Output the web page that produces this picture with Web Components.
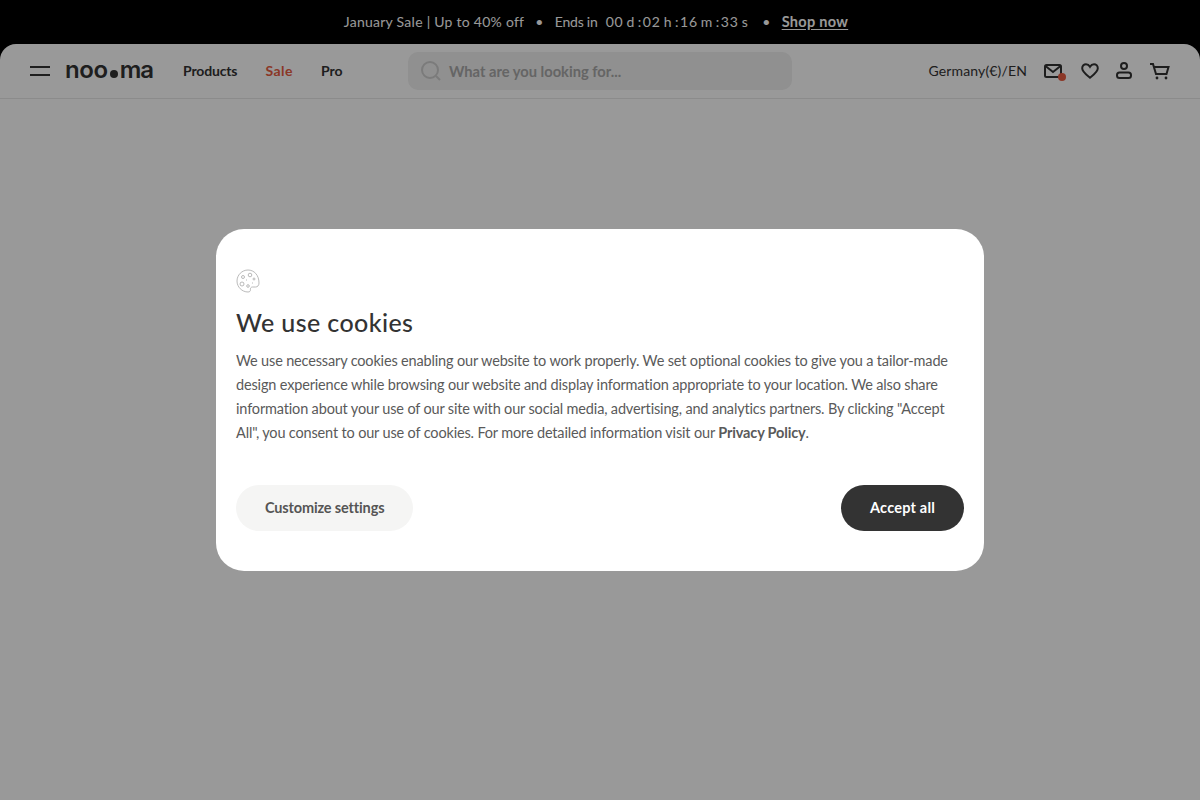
<!DOCTYPE html>
<html lang="en"><head><meta charset="utf-8"><title>noo.ma</title>
<style>
html,body{margin:0;height:100%;background:#000}
body{font-family:Lato,"Liberation Sans",sans-serif;color:#333;overflow:hidden}
</style></head><body>
<noo-page>
  <noo-announcement></noo-announcement>
  <noo-header></noo-header>
</noo-page>
<noo-overlay>
  <noo-cookie-dialog></noo-cookie-dialog>
</noo-overlay>
<script>
function def(name,html){customElements.define(name,class extends HTMLElement{constructor(){super();this.attachShadow({mode:'open'}).innerHTML=html}})}
def('noo-page',`<style>:host{display:flex;flex-direction:column;height:800px;background:#000}
::slotted(noo-header){flex:1}</style><slot></slot>`);
def('noo-announcement',`<style>:host{display:flex;height:42px;padding-bottom:2px;align-items:center;justify-content:center;color:#fff;font-size:14px;letter-spacing:.26px;white-space:nowrap;background:#000;padding-right:8px}
.d{margin:0 11px}.e{letter-spacing:-.2px}.b{font-size:14.5px;font-weight:700;text-decoration:underline;text-underline-offset:2px;letter-spacing:.3px}
.c{display:flex;margin-left:8px;letter-spacing:.5px}.n{letter-spacing:.8px}.u{margin:0 3px}.k{margin-right:1px}</style>
<span>January Sale | Up to 40% off</span><span class="d">•</span><span class="e">Ends in</span>
<span class="c"><span class="n">00</span><span class="u">d</span><span class="k">:</span><span class="n">02</span><span class="u">h</span><span class="k">:</span><span class="n">16</span><span class="u">m</span><span class="k">:</span><span class="n">33</span><span class="u">s</span></span>
<span class="d">•</span><a class="b">Shop now</a>`);
def('noo-header',`<style>:host{display:block;background:#fff;border-radius:16px 16px 0 0}
.bar{display:grid;grid-template-columns:1fr 384px 1fr;align-items:center;height:54px;padding:0 30px;border-bottom:1px solid #e8e8e8}
.l,.r{display:flex;align-items:center}
.logo{font:600 24px/1 Inter,sans-serif;letter-spacing:-.4px;color:#333;margin-left:15px;padding-bottom:3px;display:flex;align-items:center;width:89px;white-space:nowrap}
.logo i{flex:none;width:8px;height:8px;border-radius:50%;background:#333;margin:8px 2px 0 2px}
.logo span+i+span{letter-spacing:-1px}
nav{display:flex;gap:28px;margin-left:29px;padding-bottom:2px;font-size:14px;font-weight:700;letter-spacing:-.15px}
.sale{color:#e85c41;letter-spacing:.5px}.pro{letter-spacing:0}
.s{height:38px;border-radius:10px;background:#f0f0f0;display:flex;align-items:center;padding-left:13px;gap:8px;color:#a8a8a8;font-size:14.7px;font-weight:700}
.s span{padding-bottom:1px}
.r{justify-content:flex-end}
.loc{font-size:14px;margin-right:17px;letter-spacing:.15px;padding-bottom:2px}
.ic{display:flex;align-items:center}
svg{display:block;fill:none;stroke:#333;stroke-width:2}
.m{position:relative}.m b{position:absolute;right:-4px;bottom:-3px;width:8px;height:8px;border-radius:50%;background:#e85c41}</style>
<div class="bar"><div class="l">
<svg width="20" height="12" viewBox="0 0 20 12"><path d="M0 2h20M0 10h20"/></svg>
<div class="logo"><span>noo</span><i></i><span>ma</span></div>
<nav><span>Products</span><span class="sale">Sale</span><span class="pro">Pro</span></nav></div>
<div class="s"><svg width="20" height="20" viewBox="0 0 20 20" style="stroke:#cdcdcd"><circle cx="9" cy="9" r="8"/><path d="M15 15l4 4"/></svg><span>What are you looking for...</span></div>
<div class="r"><span class="loc">Germany(€)/EN</span><div class="ic">
<span class="m"><svg width="18" height="14" viewBox="0 0 18 14"><rect x="1" y="1" width="16" height="12" rx="1.500"/><path d="M1.500 2l7.500 6 7.500-6"/></svg><b></b></span>
<svg style="margin-left:19px" width="18" height="16" viewBox="0 0 18 16"><path d="M9 14.600C5 11.400 1.200 8.800 1.200 5.200 1.200 2.800 3 1.200 5 1.200c1.700 0 3 .9 4 2.600 1-1.700 2.300-2.600 4-2.600 2 0 3.800 1.600 3.800 4 0 3.600-3.800 6.200-7.800 9.400z"/></svg>
<svg style="margin-left:16px;margin-top:-1px" width="18" height="17" viewBox="0 0 18 17"><circle cx="9" cy="4" r="3"/><rect x="2" y="10.500" width="14" height="5.500" rx="2.500"/></svg>
<svg style="margin-left:17px" width="20" height="17" viewBox="0 0 20 17"><path d="M0 1h3l3 10h10.500l2-7H4"/><circle cx="7" cy="15" r="1.400" fill="#333" stroke="none"/><circle cx="16" cy="15" r="1.400" fill="#333" stroke="none"/></svg>
</div></div></div>`);
def('noo-overlay',`<style>:host{position:fixed;inset:0;display:flex;align-items:center;justify-content:center;background:rgba(0,0,0,.4)}</style><slot></slot>`);
def('noo-button',`<style>:host{display:inline-flex;align-items:center;box-sizing:border-box;height:46px;padding:0 29px 2px;border-radius:23px;font-size:14.5px;font-weight:700;letter-spacing:var(--ls);background:var(--bg);color:var(--fg);white-space:nowrap}</style><slot></slot>`);
def('noo-cookie-dialog',`<style>:host{display:block;width:728px;background:#fff;border-radius:28px;padding:40px 20px;color:#333}
svg{display:block;fill:none;stroke:#a8a8a8;stroke-width:.8}
h2{margin:12px 0 0;font-size:25px;line-height:34px;font-weight:500;letter-spacing:.4px;color:#333}
p{margin:10px 0 0;font-size:14.5px;line-height:24px;letter-spacing:-.16px;color:#5a5a5a}
p b{font-weight:700}
.row{display:flex;justify-content:space-between;margin-top:40px}
noo-button.c{--bg:#f5f5f4;--fg:#555;--ls:-.15px}noo-button.a{--bg:#333;--fg:#fff;--ls:.2px}</style>
<svg width="24" height="24" viewBox="0 0 24 24"><path d="M12 1C6 1 1 6 1 12s5 11 11 11c1.800 0 2.600-1 2.400-2.300-.2-1.500.6-2.700 2.100-2.700h3c2 0 3.500-1.500 3.500-4C23 6 18 1 12 1z"/><circle cx="7" cy="8" r="1.500"/><circle cx="14" cy="6" r="1.800"/><circle cx="6" cy="15" r="2"/><circle cx="12" cy="17" r="1.300"/><circle cx="18" cy="10" r="1"/><path d="M10 11h1M16 14h1"/></svg>
<h2>We use cookies</h2>
<p>We use necessary cookies enabling our website to work properly. We set optional cookies to give you a tailor-made design experience while browsing our website and display information appropriate to your location. We also share information about your use of our site with our social media, advertising, and analytics partners. By clicking "Accept All", you consent to our use of cookies. For more detailed information visit our <b>Privacy Policy</b>.</p>
<div class="row"><noo-button class="c">Customize settings</noo-button><noo-button class="a">Accept all</noo-button></div>`);
</script>
</body></html>
